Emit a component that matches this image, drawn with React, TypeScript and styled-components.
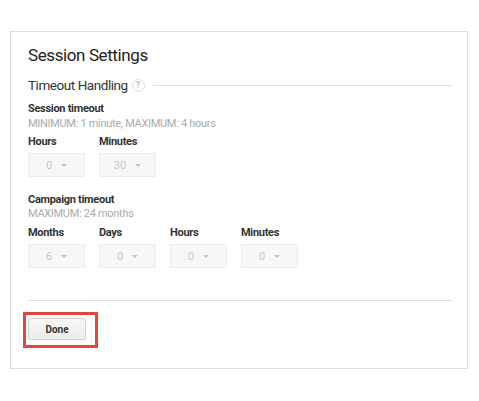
import React from "react";
import styled, { createGlobalStyle } from "styled-components";

const Global = createGlobalStyle`
  html, body { margin: 0; padding: 0; background: #fff; }
  body { font-family: Roboto, "Liberation Sans", Arial, sans-serif; }
`;

const Page = styled.div`
  padding: 31px 0 0 10px;
`;

const Card = styled.div`
  width: 425px;
  height: 336px;
  border: 1px solid #dcdcdc;
  padding: 0 14px 0 17px;
  display: flex;
  flex-direction: column;
`;

const Title = styled.h1`
  margin: 13px 0 0;
  font-size: 17px;
  line-height: 20px;
  font-weight: 400;
  letter-spacing: -0.4px;
  color: #222;
`;

const SectionHead = styled.div`
  display: flex;
  align-items: center;
  margin-top: 11px;
  height: 18px;
`;

const SectionTitle = styled.span`
  font-size: 13.5px;
  line-height: 18px;
  letter-spacing: -0.45px;
  color: #333;
`;

const Help = styled.span`
  width: 11px;
  height: 11px;
  border: 1px solid #dadada;
  border-radius: 50%;
  color: #c4c4c4;
  font-size: 9px;
  font-weight: 700;
  line-height: 11px;
  text-align: center;
  margin-left: 4px;
`;

const Rule = styled.div`
  flex: 1;
  height: 1px;
  background: #e0e0e0;
  margin-left: 8px;
`;

const Group = styled.div<{ $top: number }>`
  margin-top: ${(p) => p.$top}px;
`;

const Label = styled.div`
  font-size: 11px;
  line-height: 14px;
  font-weight: 700;
  letter-spacing: -0.3px;
  color: #333;
`;

const Hint = styled.div<{ $gap: number }>`
  margin-top: ${(p) => p.$gap}px;
  font-size: 11px;
  line-height: 14px;
  letter-spacing: -0.3px;
  color: #aaa;
`;

const Fields = styled.div<{ $gap: number }>`
  display: flex;
  gap: 14px;
  margin-top: ${(p) => p.$gap}px;
`;

const Field = styled.div`
  display: flex;
  flex-direction: column;
  gap: 4px;
`;

const Select = styled.div`
  width: 55px;
  height: 22px;
  border: 1px solid #ececec;
  background: #f7f7f7;
  display: flex;
  align-items: center;
  justify-content: center;
  gap: 9px;
  font-size: 11px;
  color: #c8c8c8;
`;

const Caret = styled.span`
  width: 0;
  height: 0;
  margin-top: 1px;
  border-left: 3px solid transparent;
  border-right: 3px solid transparent;
  border-top: 3px solid #c4c4c4;
`;

const Footer = styled.div`
  margin-top: auto;
  margin-bottom: 20px;
  border-top: 1px solid #e0e0e0;
`;

const Highlight = styled.div`
  display: inline-block;
  margin: 11px 0 0 -5px;
  border: 3px solid #e8443d;
  padding: 3px 9px 5px 2px;
`;

const Button = styled.button`
  display: block;
  width: 58px;
  height: 22px;
  border: 1px solid #d2d2d2;
  border-radius: 2px;
  background: linear-gradient(#f6f6f6, #ededed);
  font-family: Roboto, "Liberation Sans", Arial, sans-serif;
  font-size: 10px;
  font-weight: 700;
  color: #333;
  padding: 0;
`;

const Dropdown = ({ label, value }: { label: string; value: string }) => (
  <Field>
    <Label>{label}</Label>
    <Select>
      <span>{value}</span>
      <Caret />
    </Select>
  </Field>
);

export default function App() {
  return (
    <Page>
      <Global />
      <Card>
        <Title>Session Settings</Title>
        <SectionHead>
          <SectionTitle>Timeout Handling</SectionTitle>
          <Help>?</Help>
          <Rule />
        </SectionHead>
        <Group $top={8}>
          <Label>Session timeout</Label>
          <Hint $gap={1}>MINIMUM: 1 minute, MAXIMUM: 4 hours</Hint>
          <Fields $gap={4}>
            <Dropdown label="Hours" value="0" />
            <Dropdown label="Minutes" value="30" />
          </Fields>
        </Group>
        <Group $top={16}>
          <Label>Campaign timeout</Label>
          <Hint $gap={0}>MAXIMUM: 24 months</Hint>
          <Fields $gap={5}>
            <Dropdown label="Months" value="6" />
            <Dropdown label="Days" value="0" />
            <Dropdown label="Hours" value="0" />
            <Dropdown label="Minutes" value="0" />
          </Fields>
        </Group>
        <Footer>
          <Highlight>
            <Button>Done</Button>
          </Highlight>
        </Footer>
      </Card>
    </Page>
  );
}
